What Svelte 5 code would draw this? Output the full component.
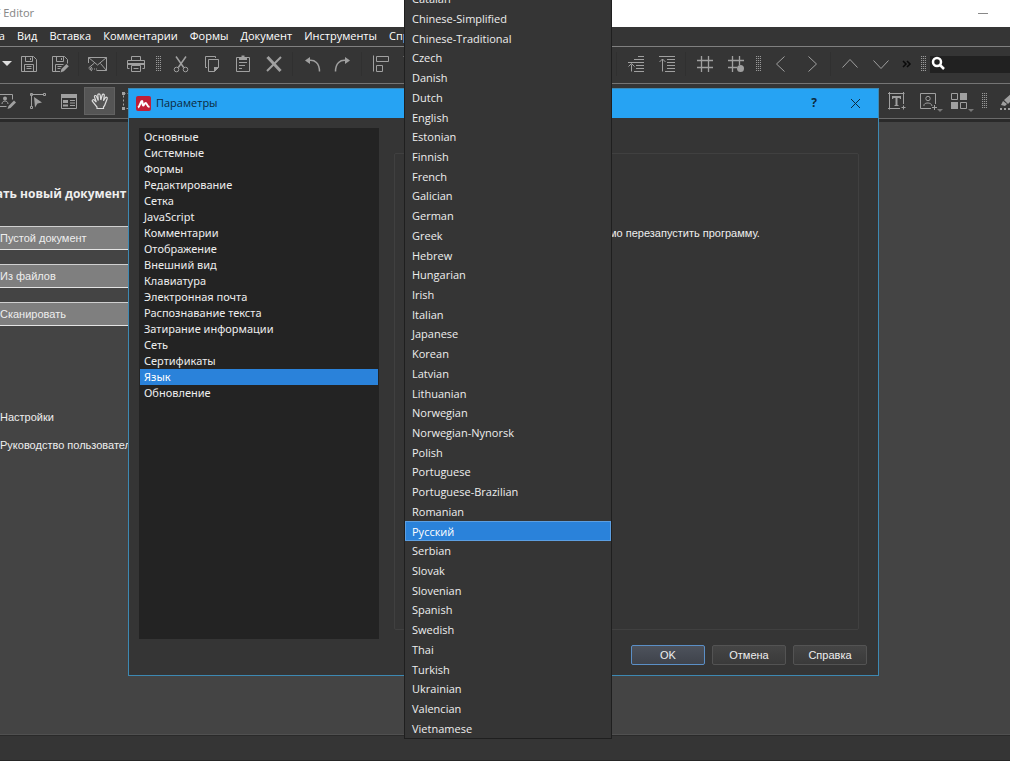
<script>
    let category = $state('Язык')
    let language = $state('Русский')

    const menus = ['Правка', 'Вид', 'Вставка', 'Комментарии', 'Формы', 'Документ', 'Инструменты', 'Справка']

    const categories = [
        'Основные', 'Системные', 'Формы', 'Редактирование', 'Сетка', 'JavaScript',
        'Комментарии', 'Отображение', 'Внешний вид', 'Клавиатура', 'Электронная почта',
        'Распознавание текста', 'Затирание информации', 'Сеть', 'Сертификаты', 'Язык', 'Обновление'
    ]

    const languages = [
        'Catalan', 'Chinese-Simplified', 'Chinese-Traditional', 'Czech', 'Danish', 'Dutch',
        'English', 'Estonian', 'Finnish', 'French', 'Galician', 'German', 'Greek', 'Hebrew',
        'Hungarian', 'Irish', 'Italian', 'Japanese', 'Korean', 'Latvian', 'Lithuanian',
        'Norwegian', 'Norwegian-Nynorsk', 'Polish', 'Portuguese', 'Portuguese-Brazilian',
        'Romanian', 'Русский', 'Serbian', 'Slovak', 'Slovenian', 'Spanish', 'Swedish', 'Thai',
        'Turkish', 'Ukrainian', 'Valencian', 'Vietnamese'
    ]

    // '|' is a thin separator, ':' a drag handle
    const mainTools = [
        'save', 'saveAs', '|', 'mail', '|', 'print', ':',
        'cut', 'copy', 'paste', 'remove', '|', 'undo', 'redo', '|',
        'alignLeft', 'alignTop', 'alignLeft', 'alignTop', 'alignLeft', 'alignTop', 'alignLeft', 'alignTop', '|',
        'lower', 'raise', '|', 'grid', 'snap', ':',
        'prev', 'next', '|', 'up', 'down'
    ]
    const editTools = ['editObject', 'editPath', 'editForm', 'hand', 'select']
    const insertTools = ['addText', 'addImage', 'addShape']

    const labels = {
        save: 'Сохранить', saveAs: 'Сохранить как', mail: 'Отправить', print: 'Печать',
        cut: 'Вырезать', copy: 'Копировать', paste: 'Вставить', remove: 'Удалить',
        undo: 'Отменить', redo: 'Вернуть', alignLeft: 'По левому краю', alignTop: 'По верхнему краю',
        lower: 'Переместить ниже', raise: 'Переместить выше', grid: 'Сетка', snap: 'Привязка к сетке',
        prev: 'Назад', next: 'Вперёд', up: 'Вверх', down: 'Вниз',
        editObject: 'Изменить объект', editPath: 'Изменить контур', editForm: 'Изменить форму',
        hand: 'Рука', select: 'Выделение', addText: 'Добавить текст', addImage: 'Добавить изображение',
        addShape: 'Добавить фигуру', marker: 'Маркер'
    }

    const icons = {
        save: '<path d="M2.5 2.5h12l3 3v12h-15zM6.5 2.5v5h7v-5M11.5 4v2M5.5 17.5v-7h9v7M7.5 12.5h5M7.5 14.5h5"/>',
        saveAs: '<path d="M10 17.5H2.5v-15h12l3 3v4M6.5 2.5v5h7v-5M11.5 4v2M5.5 17.5v-7h8M7.5 12.5h4M7.5 14.5h3"/><path class="solid" d="M10.5 18.5l1-3.5 5-5 2.3 2.3-5 5z"/>',
        mail: '<path d="M.5 9V3.5h18v13H8.5M.5 3.5l9 7.5 9-7.5M18.5 16.5l-6-7M.5 14l6-5M4 13l-2.5 2 2.5 2M2 15h3M6 15h1M8 15h1"/>',
        print: '<path d="M5.5 6.5v-4h9v4M3.5 14.5h-2v-8h17v8h-2M5.5 11.5h9v6h-9zM7.5 14.5h5"/><path class="solid" d="M2 9h16v2H2z"/>',
        cut: '<path stroke-width="1.5" d="M5 2.5l7.7 11M15 2.5l-7.7 11"/><circle cx="5.5" cy="15.5" r="2.3"/><circle cx="14.5" cy="15.5" r="2.3"/>',
        copy: '<path d="M5 13.5H3.5v-11h10V4M6.5 5.5h10v8l-4 4h-6z"/><path class="solid" d="M12 18v-5h5z"/>',
        paste: '<path d="M6 3.5H3.5v14h13v-14H14M6 8.5h8M6 11.5h6M6 14.5h3"/><path class="solid" d="M6 3h2.5V1.5h3V3H14v3H6z"/>',
        remove: '<path stroke-width="3" d="M3.5 3l13 14"/><path stroke-width="2" d="M17 3L3 17"/>',
        undo: '<path stroke-width="1.5" d="M6 6.5c7-1.5 11.5 3 11.5 11"/><path class="solid" d="M8 3v7L3 6.5z"/>',
        redo: '<path stroke-width="1.5" d="M14 6.5c-7-1.5-11.5 3-11.5 11"/><path class="solid" d="M12 3v7l5-3.5z"/>',
        alignLeft: '<path d="M2.5 1.5v16M5.5 2.5h12v5h-12zM5.5 11.5h6v6h-6z"/>',
        alignTop: '<path d="M1.5 2.5h16M2.5 5.5h5v12h-5zM11.5 5.5h5v6h-5z"/>',
        lower: '<path d="M12 2.5h6M8 5.5h10M2 8.5h16M10 11.5h8M10 14.5h8M8 17.5h10M5.5 17.5v-7M2.5 12.5l3-3 3 3"/>',
        raise: '<path d="M2 2.5h16M10 5.5h8M10 8.5h8M10 11.5h8M10 14.5h8M8 17.5h10M5.5 17.5V5M2.5 8l3-3 3 3"/>',
        grid: '<path stroke-width="1.3" d="M6.5 2v16M13.5 2v16M2 6.5h16M2 13.5h16"/>',
        snap: '<path stroke-width="1.3" d="M6.5 2v16M13.5 2v9M2 6.5h16M2 13.5h9"/><circle class="solid" cx="14.5" cy="14.5" r="3.5"/>',
        prev: '<path d="M13.5 2.5l-8 7.5 8 7.5"/>',
        next: '<path d="M6.5 2.5l8 7.5-8 7.5"/>',
        up: '<path d="M2.5 13.5L10 5.5l7.5 8"/>',
        down: '<path d="M2.5 6.5L10 14.5l7.5-8"/>',
        editObject: '<path d="M1.5 16.5v-13h14v5M1.5 15.5h8M5 13c0-4 6-4 6 0"/><circle class="solid" cx="8" cy="7.5" r="2"/><path class="solid" d="M10.5 18l1-3 5.5-5.5 2 2-5.5 5.5z"/>',
        editPath: '<path d="M3.5 16V3.5h12M2.5 2.5h2v2h-2zM15.5 2.5h2v2h-2zM2.5 15.5h2v2h-2z"/><path class="solid" d="M6 6l8 5.5-4.5 1L7 16.5z"/>',
        editForm: '<path d="M2.5 3.5h15v14h-15z"/><path class="solid" d="M2 3h16v4H2zM4 9h5v3H4zM4 13.5h5v2H4zM11 9h5v1h-5zM11 11.5h5v1h-5zM11 14h5v1h-5z"/>',
        hand: '<path stroke-width="1.2" d="M7 17.5v-1.5L2.5 10.5c-1-1.5.8-2.3 1.8-1.3l2 2L4.5 6c-.4-1.7 1.5-2 2-.6L8.3 9.5 7.8 4c0-1.6 2.2-1.6 2.4 0l.6 5L12.2 4c.5-1.5 2.4-1 2.1.6L13.5 9.8l1.8-3c.9-1.2 2.3-.3 1.9.9l-2 5.3c-.4 1.5-1 2.3-1.7 3v1.5z"/>',
        select: '<path stroke-dasharray="2 2" d="M2.5 2.5h15v15h-15z"/><path class="solid" d="M1 1h3v3H1zM1 16h3v3H1z"/>',
        addText: '<path d="M2.5 1v17.5M1 2.5h16.5M16.5 1v12M1 17.5h12M14.5 16.5h4M16.5 14.5v4"/><path class="solid" d="M5 5h9v3h-1l-.5-1h-2v7h1v1h-4v-1h1V7h-2L6 8H5z"/>',
        addImage: '<path d="M17.5 13V2.5h-15v15H13M6 15c-1-4 8-4 8 0M14 16.5h5M16.5 14v5"/><circle cx="10" cy="7.5" r="2.2"/>',
        addShape: '<path d="M2.5 2.5h6v6h-6zM11.5 11.5h6v6h-6z"/><path class="solid" d="M11 2h7v7h-7zM2 11h7v7H2z"/>',
        marker: '<path class="solid" d="M2 14l2-4 4 3-2 2zM5 9l9-8 4 3-9 9zM1 17h2v2H1zM5 17h2v2H5zM9 17h2v2H9z"/>'
    }
</script>

{#snippet tool(name)}
    {#if name === '|'}
        <span class="separator"></span>
    {:else if name === ':'}
        <span class="grip"></span>
    {:else}
        <button class="tool" class:active={name === 'hand'} aria-label={labels[name]}>
            <svg viewBox="0 0 20 20" width="20" height="20">{@html icons[name]}</svg>
        </button>
    {/if}
{/snippet}

<div class="app">
    <header class="titlebar">
        <span class="app-name">PDF Editor</span>
        <button class="minimize" aria-label="Свернуть"></button>
    </header>

    <nav class="menubar">
        {#each menus as menu}
            <button>{menu}</button>
        {/each}
    </nav>

    <div class="toolbar">
        <button class="caret" aria-label="Открыть недавние">
            <svg viewBox="0 0 10 6" width="10" height="6"><path d="M0 0h10L5 5z" /></svg>
        </button>
        {#each mainTools as name}
            {@render tool(name)}
        {/each}
        <button class="more" aria-label="Ещё">
            <svg viewBox="0 0 10 8" width="10" height="8"><path d="M2 1l3 3-3 3M6 1l3 3-3 3" /></svg>
        </button>
        <span class="grip"></span>
        <label class="search">
            <svg viewBox="0 0 14 14" width="14" height="14"><circle cx="5" cy="5" r="4" /><path d="M8 8l4 4" /></svg>
            <input type="text" aria-label="Поиск" />
        </label>
    </div>

    <div class="toolbar second">
        {#each editTools as name}
            {@render tool(name)}
        {/each}
        <div class="insert-tools">
            {#each insertTools as name}
                <span class:has-menu={name !== 'addText'}>{@render tool(name)}</span>
            {/each}
            <span class="grip wide"></span>
            {@render tool('marker')}
        </div>
    </div>

    <main class="start">
        <h1>Создать новый документ</h1>
        <div class="actions">
            <button>Пустой документ</button>
            <button>Из файлов</button>
            <button>Сканировать</button>
        </div>
        <div class="links">
            <a href="#settings">Настройки</a>
            <a href="#manual">Руководство пользователя</a>
        </div>
    </main>

    <footer class="statusbar"></footer>

    <div class="dialog" role="dialog" aria-labelledby="dialog-title">
        <div class="dialog-title">
            <svg class="logo" viewBox="0 0 15 15" width="15" height="15">
                <rect width="15" height="15" rx="2" />
                <path d="M2 11.5C4 10.5 4.5 5 6 5c1 0 0 4.500 1.200 4.500C8 9.500 8.500 7 9.700 7c1.300 0 1 3.500 3.800 4" />
            </svg>
            <h2 id="dialog-title">Параметры</h2>
            <button class="help">?</button>
            <button class="close" aria-label="Закрыть">
                <svg viewBox="0 0 11 11" width="11" height="11"><path d="M1 1l9 9M10 1l-9 9" /></svg>
            </button>
        </div>
        <div class="dialog-body">
            <div class="categories">
                {#each categories as item}
                    <button class:selected={item === category} onclick={() => category = item}>{item}</button>
                {/each}
            </div>
            <section class="panel">
                <select bind:value={language} aria-label="Язык">
                    {#each languages as item}
                        <option>{item}</option>
                    {/each}
                </select>
                <p>Чтобы применить изменения, необходимо перезапустить программу.</p>
            </section>
        </div>
        <div class="dialog-buttons">
            <button class="default">OK</button>
            <button>Отмена</button>
            <button>Справка</button>
        </div>
    </div>

    <div class="popup" role="listbox" aria-label="Язык">
        {#each languages as item}
            <button
                role="option"
                aria-selected={item === language}
                class:selected={item === language}
                onclick={() => language = item}
            >{item}</button>
        {/each}
    </div>
</div>

<style>
    :global(body) {
        background: #444;
    }

    .app {
        position: relative;
        display: flex;
        flex-direction: column;
        height: 100vh;
        overflow: hidden;
        background: #444;
        color: #eee;
        font-family: "Open Sans", "Noto Sans", sans-serif;
        font-size: 11px;
        line-height: 16px;
    }

    button {
        margin: 0;
        padding: 0;
        border: none;
        background: none;
        color: inherit;
        font: inherit;
        white-space: nowrap;
    }

    svg {
        display: block;
        flex: none;
        overflow: visible;
        fill: none;
        stroke: currentColor;
    }

    svg :global(.solid) {
        fill: currentColor;
        stroke: none;
    }

    .titlebar {
        display: flex;
        flex: none;
        justify-content: space-between;
        align-items: center;
        height: 26px;
        padding: 0 22px 1px 0;
        background: #fff;
        color: #8a8a8a;
    }

    .app-name {
        margin-left: -20px;
        font-family: "Noto Sans", sans-serif;
        font-size: 11px;
    }

    .minimize {
        width: 10px;
        height: 1px;
        background: #888;
    }

    .menubar {
        display: flex;
        flex: none;
        gap: 12px;
        height: 17px;
        margin-left: -34px;
        padding-bottom: 2px;
        background: #353535;
        border-bottom: 1px solid #808080;
        color: #fff;
    }

    .toolbar {
        display: flex;
        flex: none;
        align-items: center;
        height: 34px;
        padding-bottom: 2px;
        overflow: hidden;
        background: #353535;
        border-bottom: 1px solid #757575;
        color: #a0a0a0;
    }

    .toolbar.second {
        border-bottom: 2px solid #2a2a2a;
        box-shadow: inset 0 -1px #2a2a2a, inset 0 -2px #6a6a6a;
    }

    .second > .tool:first-child {
        margin-left: -9px;
    }

    .tool {
        display: flex;
        flex: none;
        justify-content: center;
        align-items: center;
        width: 31px;
        height: 28px;
    }

    .tool.active {
        background: #555;
        box-shadow: inset 0 0 0 1px #626262;
        color: #ddd;
    }

    .separator {
        flex: none;
        width: 1px;
        height: 24px;
        margin: 0 3px;
        background: #303030;
    }

    .grip {
        flex: none;
        width: 5px;
        height: 16px;
        margin: 0 4px 0 5px;
        background:
            repeating-linear-gradient(0deg, #353535 0 1px, transparent 1px 2px),
            repeating-linear-gradient(90deg, #989898 0 1px, #454545 1px 2px);
    }

    .grip.wide {
        margin: 0 6px 0 8px;
    }

    .caret {
        flex: none;
        width: 13px;
        padding-left: 2px;
    }

    .caret path {
        fill: #ddd;
        stroke: none;
    }

    .more {
        display: flex;
        flex: none;
        justify-content: center;
        width: 20px;
        color: #0a0a0a;
    }

    .more path {
        stroke-width: 1.5;
    }

    .search {
        display: flex;
        flex: 1;
        align-items: center;
        min-width: 0;
        height: 17px;
        padding-left: 2px;
        background: #212121;
        color: #fff;
    }

    .search svg {
        stroke-width: 2.5;
    }

    .search input {
        flex: 1;
        min-width: 0;
        padding: 0 4px;
        border: none;
        outline: none;
        background: transparent;
        color: inherit;
        font: inherit;
    }

    .insert-tools {
        display: flex;
        align-items: center;
        margin: 0 -14px 0 auto;
    }

    .has-menu {
        position: relative;
    }

    .has-menu::after {
        content: "";
        position: absolute;
        right: 0;
        bottom: 3px;
        border: 3px solid transparent;
        border-top-color: #777;
        border-bottom: none;
    }

    .start {
        display: flex;
        flex: 1;
        flex-direction: column;
        align-items: flex-start;
        min-height: 0;
        margin-left: -34px;
        padding-top: 64px;
        font-family: "Liberation Sans", Arial, sans-serif;
    }

    .start h1 {
        margin: 0;
        font-family: "Open Sans", "Noto Sans", sans-serif;
        font-size: 12px;
        line-height: 16px;
    }

    .actions {
        display: flex;
        flex-direction: column;
        gap: 14px;
        width: 260px;
        margin-top: 24px;
    }

    .actions button {
        height: 24px;
        padding-left: 34px;
        background: #7f7f7f;
        border-top: 1px solid #d0d0d0;
        border-bottom: 1px solid #e4e4e4;
        text-align: left;
    }

    .links {
        display: flex;
        flex-direction: column;
        gap: 12px;
        margin-top: 83px;
        padding-left: 34px;
    }

    .links a {
        color: inherit;
        text-decoration: none;
    }

    .statusbar {
        flex: none;
        height: 26px;
        background: #353535;
        border-top: 1px solid #2a2a2a;
        border-bottom: 1px solid #262626;
        box-shadow: 0 -1px #505050;
        box-sizing: border-box;
    }

    .dialog {
        position: absolute;
        top: 88px;
        right: 131px;
        bottom: 85px;
        left: 128px;
        display: flex;
        flex-direction: column;
        box-sizing: border-box;
        background: #353535;
        border: 1px solid #3d89b3;
    }

    .dialog-title {
        display: flex;
        flex: none;
        align-items: center;
        height: 28px;
        padding: 0 17px 1px 7px;
        background: #26a3f3;
        color: #0c2a40;
    }

    .dialog-title h2 {
        flex: 1;
        margin: 0 0 0 5px;
        font-size: 11px;
        font-weight: 400;
    }

    .logo rect {
        fill: #c01f36;
        stroke: none;
    }

    .logo path {
        stroke: #fff;
        stroke-width: 2;
    }

    .help {
        margin-right: 33px;
        font-size: 12px;
        font-weight: 700;
    }

    .dialog-body {
        display: flex;
        flex: 1;
        gap: 15px;
        min-height: 0;
        padding: 10px 19px 0 10px;
    }

    .categories {
        display: flex;
        flex: none;
        flex-direction: column;
        box-sizing: border-box;
        width: 240px;
        padding: 1px;
        background: #232323;
        font-family: "Noto Sans", "Open Sans", sans-serif;
    }

    .categories button {
        height: 16px;
        padding-left: 4px;
        text-align: left;
    }

    .categories .selected {
        background: #2a82da;
        color: #fff;
    }

    .panel {
        flex: 1;
        margin: 25px 0 9px;
        padding: 30px 11px;
        border: 1px solid #404040;
        border-radius: 2px;
        font-family: "Liberation Sans", Arial, sans-serif;
    }

    .panel select {
        width: 200px;
        height: 20px;
        background: #353535;
        border: 1px solid #222;
        color: inherit;
        font: inherit;
    }

    .panel p {
        margin: 21px 0 0;
        white-space: nowrap;
    }

    .dialog-buttons {
        display: flex;
        flex: none;
        justify-content: flex-end;
        gap: 7px;
        padding: 6px 11px 10px;
        font-family: "Liberation Sans", Arial, sans-serif;
    }

    .dialog-buttons button {
        width: 74px;
        height: 20px;
        background: linear-gradient(#454545, #3a3a3a);
        border: 1px solid #535353;
        border-radius: 2px;
    }

    .dialog-buttons .default {
        background: linear-gradient(#4d525c, #3f434b);
        border-color: #5b8fc6;
    }

    .popup {
        position: absolute;
        top: -12px;
        bottom: 22px;
        left: 404px;
        display: grid;
        grid-auto-rows: 1fr;
        width: 206px;
        background: #353535;
        border: 1px solid #1f1f1f;
    }

    .popup button {
        min-height: 0;
        padding-left: 7px;
        line-height: 1;
        text-align: left;
    }

    .popup .selected {
        background: #2a82da;
        box-shadow: inset 0 0 0 1px #5c9fe2;
        color: #fff;
    }
</style>
